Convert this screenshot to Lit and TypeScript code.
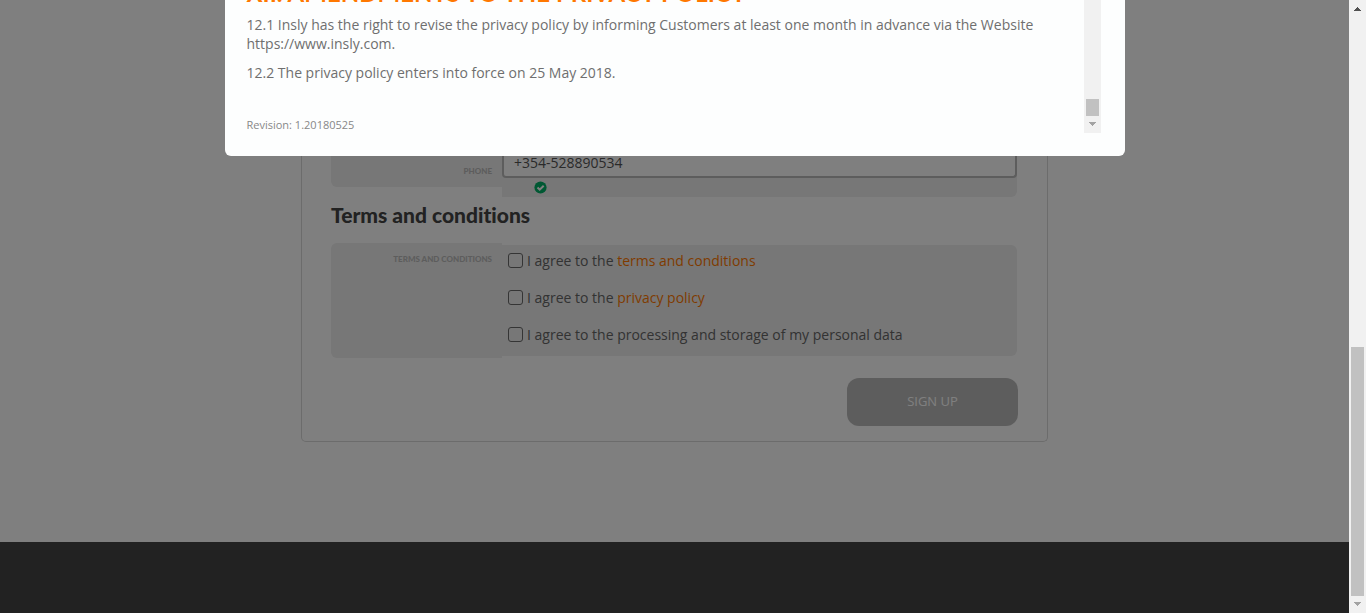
import { LitElement, html, css } from "lit";
import { customElement, property } from "lit/decorators.js";

@customElement("scroll-rail")
class ScrollRail extends LitElement {
  static styles = css`
    :host {
      display: flex;
      flex-direction: column;
      flex: none;
      width: 17px;
      background: #f1f1f1;
    }
    .track {
      flex: 1;
      display: flex;
      flex-direction: column;
      justify-content: flex-end;
      padding: 0 2px;
    }
    .thumb {
      background: #c1c1c1;
    }
    svg {
      display: block;
      width: 17px;
      height: 17px;
    }
  `;
  @property({ type: Boolean }) up = false;
  @property() size = "17px";

  render() {
    return html`
      ${this.up
        ? html`<svg viewBox="0 0 17 17" shape-rendering="crispEdges" aria-hidden="true">
            <path d="M8 7h1v1h1v1h1v1h1v1H5v-1h1V9h1V8h1z" fill="#505050" />
          </svg>`
        : ""}
      <div class="track"><div class="thumb" style="height:${this.size}"></div></div>
      <svg viewBox="0 0 17 17" shape-rendering="crispEdges" aria-hidden="true">
        <path d="M5 6h7v1h-1v1h-1v1H9v1H8V9H7V8H6V7H5z" fill="#a3a3a3" />
      </svg>
    `;
  }
}

@customElement("app-root")
class AppRoot extends LitElement {
  static styles = css`
    :host {
      display: flex;
      height: 100vh;
      overflow: hidden;
      font: 14px/19px "Open Sans", "Noto Sans", sans-serif;
      color: #6f6f6f;
    }
    * {
      box-sizing: border-box;
    }
    a {
      color: #ff7800;
      text-decoration: none;
    }
    .page {
      position: relative;
      flex: 1;
      min-width: 0;
      display: flex;
      flex-direction: column;
      align-items: center;
      background: #fff;
    }
    .card {
      width: 100%;
      max-width: 747px;
      padding: 148px 29px 15px;
      border: 1px solid #d8d8d8;
      border-top: 0;
      border-radius: 0 0 5px 5px;
      display: flex;
      flex-direction: column;
      color: #666;
    }
    .row {
      display: grid;
      grid-template-columns: 171px 1fr;
      align-items: start;
      margin-right: 1px;
    }
    .caption {
      background: #eee;
      text-align: right;
      font-family: Lato, sans-serif;
      font-size: 8px;
      line-height: 12px;
      font-weight: 900;
      color: #bbb;
      text-transform: uppercase;
      padding: 10px;
      border-radius: 6px 0 0 6px;
    }
    .phone .caption {
      padding: 17px 10px 10px;
      border-top-left-radius: 0;
    }
    .terms .caption {
      align-self: stretch;
    }
    .value {
      background: #eee;
      border-radius: 0 6px 6px 0;
    }
    .phone .value {
      border-top-right-radius: 0;
      padding-bottom: 3px;
    }
    .terms .value {
      margin: 2px 0;
      padding: 6px 6px 12px;
      display: grid;
      gap: 18px;
    }
    .field {
      display: block;
      width: 100%;
      height: 30px;
      padding: 0 10px;
      border: 2px solid #bbb;
      border-top: 0;
      border-radius: 0 0 4px 4px;
      background: #fff;
      color: #555;
      font: inherit;
    }
    .ok {
      display: block;
      width: 13px;
      height: 13px;
      margin: 3px 0 0 32px;
    }
    h2 {
      margin: 4px 0 14px;
      font-family: Lato, sans-serif;
      font-size: 21px;
      line-height: 28px;
      font-weight: 900;
      font-variant-ligatures: none;
      color: #444;
    }
    .choice {
      display: flex;
      gap: 4px;
      align-items: center;
    }
    .choice input {
      appearance: none;
      flex: none;
      width: 15px;
      height: 15px;
      margin: 0;
      border: 1px solid #6a6a6a;
      border-radius: 3px;
    }
    .submit {
      align-self: flex-end;
      width: 171px;
      height: 48px;
      margin-top: 20px;
      padding: 0 0 2px;
      border: 0;
      border-radius: 12px;
      background: #bbb;
      color: #fff;
      font: inherit;
      font-size: 13px;
    }
    footer {
      align-self: stretch;
      flex: 1;
      margin-top: 100px;
      background: #444;
    }
    .overlay {
      position: absolute;
      inset: 0;
      background: rgba(0, 0, 0, 0.5);
      display: flex;
      justify-content: center;
      align-items: flex-start;
    }
    .dialog {
      width: 100%;
      max-width: 900px;
      display: flex;
      padding: 0 24px 23px 22px;
      border-radius: 0 0 6px 6px;
      background: #fdfefe;
      overflow: hidden;
    }
    .policy {
      flex: 1;
      min-width: 0;
    }
    .policy h1 {
      margin: -22px 0 7px;
      font-family: Lato, sans-serif;
      font-size: 24px;
      line-height: 30px;
      font-weight: 700;
      color: #ff7800;
      white-space: nowrap;
    }
    .policy p {
      margin: 0 0 10px;
    }
    .policy small {
      display: block;
      margin-top: 35px;
      font-size: 11px;
      line-height: 16px;
      color: #888;
    }
  `;

  render() {
    return html`
      <div class="page">
        <form class="card">
          <div class="row phone">
            <label class="caption" for="phone">Phone</label>
            <div class="value">
              <input class="field" id="phone" type="tel" value="+354-528890534" />
              <svg class="ok" viewBox="0 0 13 13" aria-hidden="true">
                <circle cx="6.5" cy="6.5" r="6.1" fill="#00b066" />
                <path d="M3.5 6.5l2.2 2.2 4-4" fill="none" stroke="#fff" stroke-width="2" />
              </svg>
            </div>
          </div>
          <h2>Terms and conditions</h2>
          <div class="row terms">
            <div class="caption">Terms and conditions</div>
            <div class="value">
              <label class="choice"><input type="checkbox" /><span>I agree to the <a href="#terms">terms and conditions</a></span></label>
              <label class="choice"><input type="checkbox" /><span>I agree to the <a href="#privacy">privacy policy</a></span></label>
              <label class="choice"><input type="checkbox" /><span>I agree to the processing and storage of my personal data</span></label>
            </div>
          </div>
          <button class="submit" type="button">SIGN UP</button>
        </form>
        <footer></footer>
        <div class="overlay">
          <div class="dialog" role="dialog" aria-label="Privacy policy">
            <div class="policy">
              <h1>XII. AMENDMENTS TO THE PRIVACY POLICY</h1>
              <p>12.1 Insly has the right to revise the privacy policy by informing Customers at least one month in advance via the Website https://www.insly.com.</p>
              <p>12.2 The privacy policy enters into force on 25 May 2018.</p>
              <small>Revision: 1.20180525</small>
            </div>
            <scroll-rail></scroll-rail>
          </div>
        </div>
      </div>
      <scroll-rail up size="249px"></scroll-rail>
    `;
  }
}
